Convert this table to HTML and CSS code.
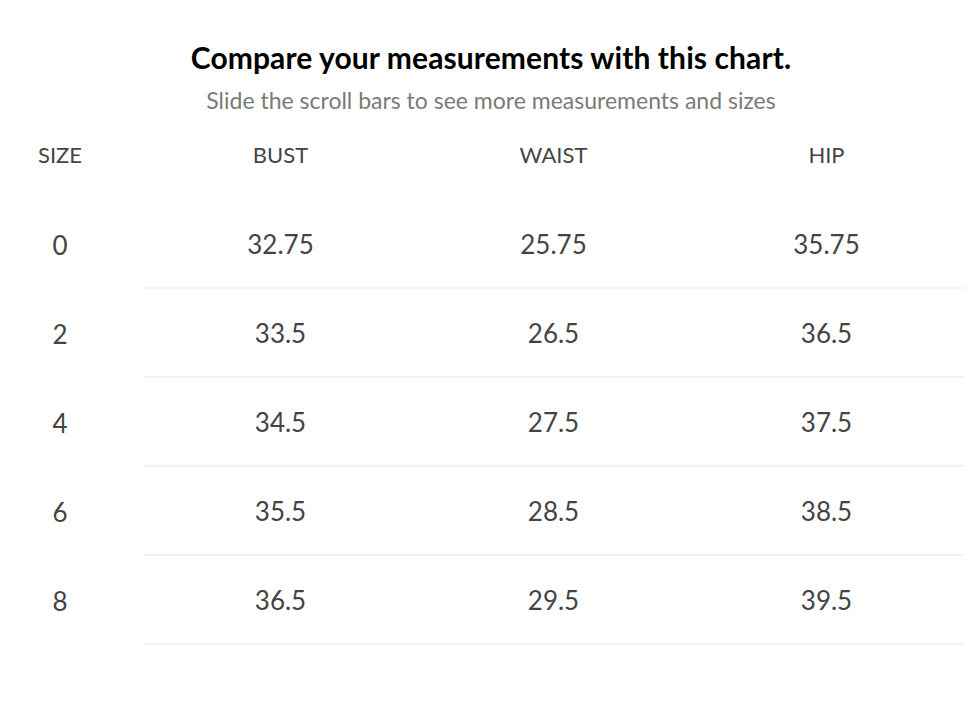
FILE: index.html
```html
<!DOCTYPE html>
<html>
<head>
<meta charset="utf-8">
<link rel="stylesheet" href="styles.css">
</head>
<body>
<div class="page">
  <div class="intro">
    <h1 class="title">Compare your measurements with this chart.</h1>
    <p class="subtitle">Slide the scroll bars to see more measurements and sizes</p>
  </div>
  <div class="chart">
    <div class="row head">
      <div class="size">SIZE</div>
      <div class="cells"><div class="cell">BUST</div><div class="cell">WAIST</div><div class="cell">HIP</div></div>
    </div>
    <div class="row">
      <div class="size">0</div>
      <div class="cells line"><div class="cell">32.75</div><div class="cell">25.75</div><div class="cell">35.75</div></div>
    </div>
    <div class="row">
      <div class="size">2</div>
      <div class="cells line"><div class="cell">33.5</div><div class="cell">26.5</div><div class="cell">36.5</div></div>
    </div>
    <div class="row">
      <div class="size">4</div>
      <div class="cells line"><div class="cell">34.5</div><div class="cell">27.5</div><div class="cell">37.5</div></div>
    </div>
    <div class="row">
      <div class="size">6</div>
      <div class="cells line"><div class="cell">35.5</div><div class="cell">28.5</div><div class="cell">38.5</div></div>
    </div>
    <div class="row">
      <div class="size">8</div>
      <div class="cells line"><div class="cell">36.5</div><div class="cell">29.5</div><div class="cell">39.5</div></div>
    </div>
  </div>
</div>
</body>
</html>
```
FILE: styles.css
```css
html, body {
  margin: 0;
  padding: 0;
  background: #ffffff;
}
body {
  font-family: "Lato", "Liberation Sans", sans-serif;
  color: #444444;
}
.page {
  width: 970px;
  height: 712px;
  overflow: hidden;
}
.intro {
  text-align: center;
  padding-top: 37px;
  padding-left: 12px;
}
.title {
  margin: 0;
  font-size: 30px;
  font-weight: 700;
  color: #000000;
  line-height: 40px;
  letter-spacing: 0.1px;
}
.subtitle {
  margin: 9px 0 0 0;
  font-size: 23px;
  font-weight: 400;
  color: #7a7a7a;
  line-height: 28px;
}
.row {
  display: flex;
  height: 89px;
}
.row.head {
  height: 86px;
  padding-bottom: 6px;
  box-sizing: border-box;
}
.size {
  width: 120px;
  margin-right: 24px;
  display: flex;
  align-items: center;
  justify-content: center;
  font-size: 26px;
}
.cells {
  width: 819px;
  display: grid;
  grid-template-columns: 273px 273px 273px;
}
.cells.line {
  border-bottom: 2px solid #f2f2f2;
  box-sizing: border-box;
}
.cell {
  display: flex;
  align-items: center;
  justify-content: center;
  font-size: 26px;
}
.head .size, .head .cell {
  font-size: 22px;
}
```
